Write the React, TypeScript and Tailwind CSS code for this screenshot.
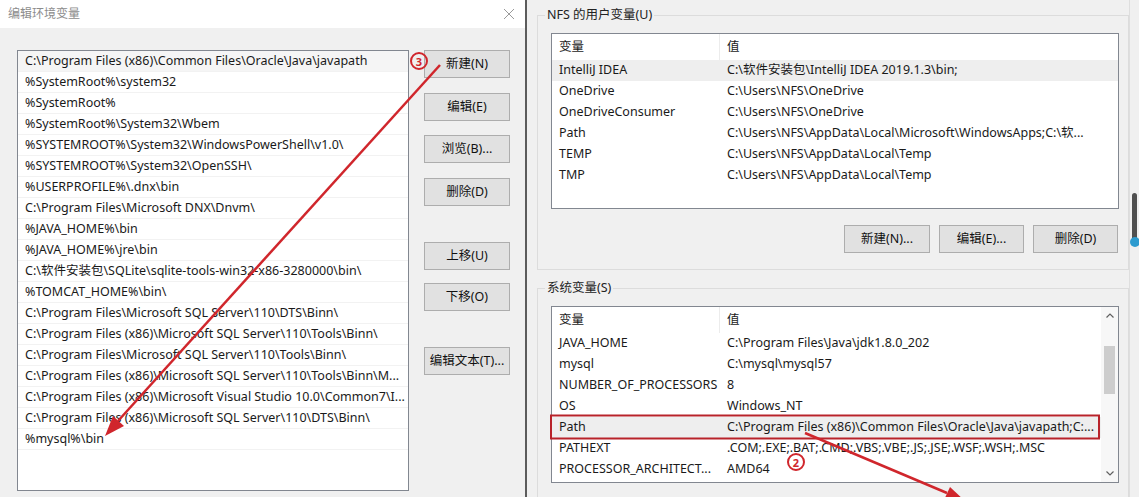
const pathEntries = [
  "C:\\Program Files (x86)\\Common Files\\Oracle\\Java\\javapath",
  "%SystemRoot%\\system32",
  "%SystemRoot%",
  "%SystemRoot%\\System32\\Wbem",
  "%SYSTEMROOT%\\System32\\WindowsPowerShell\\v1.0\\",
  "%SYSTEMROOT%\\System32\\OpenSSH\\",
  "%USERPROFILE%\\.dnx\\bin",
  "C:\\Program Files\\Microsoft DNX\\Dnvm\\",
  "%JAVA_HOME%\\bin",
  "%JAVA_HOME%\\jre\\bin",
  "C:\\软件安装包\\SQLite\\sqlite-tools-win32-x86-3280000\\bin\\",
  "%TOMCAT_HOME%\\bin\\",
  "C:\\Program Files\\Microsoft SQL Server\\110\\DTS\\Binn\\",
  "C:\\Program Files (x86)\\Microsoft SQL Server\\110\\Tools\\Binn\\",
  "C:\\Program Files\\Microsoft SQL Server\\110\\Tools\\Binn\\",
  "C:\\Program Files (x86)\\Microsoft SQL Server\\110\\Tools\\Binn\\M...",
  "C:\\Program Files (x86)\\Microsoft Visual Studio 10.0\\Common7\\I...",
  "C:\\Program Files (x86)\\Microsoft SQL Server\\110\\DTS\\Binn\\",
  "%mysql%\\bin",
];

const userVars: [string, string][] = [
  ["IntelliJ IDEA", "C:\\软件安装包\\IntelliJ IDEA 2019.1.3\\bin;"],
  ["OneDrive", "C:\\Users\\NFS\\OneDrive"],
  ["OneDriveConsumer", "C:\\Users\\NFS\\OneDrive"],
  ["Path", "C:\\Users\\NFS\\AppData\\Local\\Microsoft\\WindowsApps;C:\\软..."],
  ["TEMP", "C:\\Users\\NFS\\AppData\\Local\\Temp"],
  ["TMP", "C:\\Users\\NFS\\AppData\\Local\\Temp"],
];

const sysVars: [string, string][] = [
  ["JAVA_HOME", "C:\\Program Files\\Java\\jdk1.8.0_202"],
  ["mysql", "C:\\mysql\\mysql57"],
  ["NUMBER_OF_PROCESSORS", "8"],
  ["OS", "Windows_NT"],
  ["Path", "C:\\Program Files (x86)\\Common Files\\Oracle\\Java\\javapath;C:..."],
  ["PATHEXT", ".COM;.EXE;.BAT;.CMD;.VBS;.VBE;.JS;.JSE;.WSF;.WSH;.MSC"],
  ["PROCESSOR_ARCHITECT...", "AMD64"],
];

function WinButton({ label, className = "" }: { label: string; className?: string }) {
  return (
    <div
      className={`flex h-[28px] items-center justify-center border border-[#adadad] bg-[#e1e1e1] text-[12.5px] text-[#111] ${className}`}
    >
      {label}
    </div>
  );
}

function VarList({
  rows,
  height,
  selected,
  scrollbar,
}: {
  rows: [string, string][];
  height: string;
  selected?: number;
  scrollbar?: boolean;
}) {
  return (
    <div className={`flex ${height} border border-[#828790] bg-white`}>
      <div className="min-w-0 flex-1">
        <div className="flex h-[26px] items-center">
          <div className="flex h-full w-[168px] items-center border-r border-[#ececec] pl-[7px]">变量</div>
          <div className="pl-[7px]">值</div>
        </div>
        {rows.map(([k, v], i) => (
          <div
            key={k}
            className={`flex h-[21px] items-center whitespace-nowrap ${i === selected ? "bg-[#eeeeee]" : ""}`}
          >
            <div className="w-[168px] overflow-hidden pl-[7px]">{k}</div>
            <div className="min-w-0 flex-1 overflow-hidden pl-[7px]">{v}</div>
          </div>
        ))}
      </div>
      {scrollbar && (
        <div className="flex w-[17px] flex-col bg-[#f7f7f7]">
          <div className="flex h-[17px] items-center justify-center">
            <svg width="8" height="5" viewBox="0 0 8 5">
              <polyline points="0.5,4.5 4,1 7.5,4.5" fill="none" stroke="#606060" strokeWidth="1.2" />
            </svg>
          </div>
          <div className="flex-1">
            <div className="mx-[3px] mt-[22px] h-[48px] bg-[#cdcdcd]" />
          </div>
          <div className="flex h-[17px] items-center justify-center">
            <svg width="8" height="5" viewBox="0 0 8 5">
              <polyline points="0.5,0.5 4,4 7.5,0.5" fill="none" stroke="#606060" strokeWidth="1.2" />
            </svg>
          </div>
        </div>
      )}
    </div>
  );
}

export default function App() {
  return (
    <div className="relative flex h-[497px] w-[1139px] overflow-hidden bg-[#f0f0f0] font-['Noto_Sans','Noto_Sans_CJK_SC',sans-serif] text-[12.5px] text-[#1a1a1a]">
      {/* edit dialog */}
      <div className="flex w-[525px] shrink-0 flex-col bg-[#f0f0f0]">
        <div className="flex h-[28px] items-center justify-between bg-white pl-[8px] pr-[10px]">
          <span className="text-[12px] text-[#8c8c8c]">编辑环境变量</span>
          <svg width="12" height="12" viewBox="0 0 12 12">
            <path d="M1 1L11 11M11 1L1 11" stroke="#9a9a9a" strokeWidth="1" />
          </svg>
        </div>
        <div className="flex pl-[17px] pt-[22px]">
          <div className="h-[441px] w-[392px] border border-[#828790] bg-white">
            {pathEntries.map((p, i) => (
              <div
                key={p}
                className={`flex h-[21px] items-center overflow-hidden whitespace-nowrap border-b border-[#f2f2f2] pl-[7px] ${
                  i === 0 ? "bg-[#f5f5f5]" : ""
                }`}
              >
                {p}
              </div>
            ))}
          </div>
          <div className="ml-[15px] flex w-[86px] flex-col">
            <WinButton label="新建(N)" />
            <WinButton label="编辑(E)" className="mt-[15px]" />
            <WinButton label="浏览(B)..." className="mt-[14px]" />
            <WinButton label="删除(D)" className="mt-[15px]" />
            <WinButton label="上移(U)" className="mt-[36px]" />
            <WinButton label="下移(O)" className="mt-[13px]" />
            <WinButton label="编辑文本(T)..." className="mt-[36px]" />
          </div>
        </div>
      </div>

      <div className="w-[2px] shrink-0 bg-[#5c5c5c]" />

      {/* environment variables window */}
      <div className="flex flex-1 bg-[#f0f0f0]">
        <div className="w-[602px] pl-[10px] pt-[7px]">
          <fieldset className="w-[592px] border border-[#dcdcdc] pb-[16px] pl-[13px] pr-[9px]">
            <legend className="-ml-[6px] px-[2px] leading-[16px] text-[#222]">NFS 的用户变量(U)</legend>
            <div className="mt-[10px]">
              <VarList rows={userVars} height="h-[176px]" selected={0} />
            </div>
            <div className="mt-[16px] flex justify-end gap-[9px] pr-[1px]">
              <WinButton label="新建(N)..." className="w-[86px]" />
              <WinButton label="编辑(E)..." className="w-[85px]" />
              <WinButton label="删除(D)" className="w-[85px]" />
            </div>
          </fieldset>
          <fieldset className="mt-[10px] w-[592px] border border-[#dcdcdc] pb-[20px] pl-[13px] pr-[9px]">
            <legend className="-ml-[6px] px-[2px] leading-[16px] text-[#222]">系统变量(S)</legend>
            <div className="mt-[10px]">
              <VarList rows={sysVars} height="h-[177px]" selected={4} scrollbar />
            </div>
          </fieldset>
        </div>
        <div className="flex w-[10px] flex-col items-center border-l border-[#dedede] pt-[193px]">
          <div className="h-[50px] w-[5px] rounded-full bg-[#505050]" />
          <div className="-mt-[6px] h-[10px] w-[10px] rounded-full bg-[#2d9bcf]" />
        </div>
      </div>

      {/* annotations */}
      <svg className="pointer-events-none absolute inset-0" width="1139" height="497" viewBox="0 0 1139 497">
        <rect x="551" y="415.5" width="548" height="23" fill="none" stroke="#b8232a" strokeWidth="2" />
        <line x1="440" y1="65" x2="118" y2="421" stroke="#d0262c" strokeWidth="2.5" />
        <polygon points="105,436 124,426 113,416" fill="#d0262c" />
        <line x1="805" y1="433" x2="947" y2="493" stroke="#d0262c" strokeWidth="2.5" />
        <polygon points="965,501 950,487 944,500" fill="#d0262c" />
      </svg>
      <div className="pointer-events-none absolute left-[410px] top-[52px] flex h-[18px] w-[18px] items-center justify-center rounded-full border-2 border-[#d0262c] text-[11px] font-bold leading-none text-[#d0262c]">
        3
      </div>
      <div className="pointer-events-none absolute left-[787px] top-[453px] flex h-[18px] w-[18px] items-center justify-center rounded-full border-2 border-[#d0262c] text-[11px] font-bold leading-none text-[#d0262c]">
        2
      </div>
    </div>
  );
}
